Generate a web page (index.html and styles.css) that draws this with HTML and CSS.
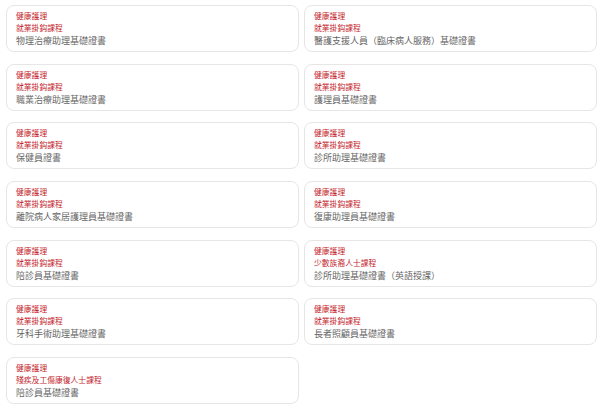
FILE: index.html
```html
<!DOCTYPE html>
<html lang="zh-Hant">
<head>
<meta charset="utf-8">
<link rel="stylesheet" href="styles.css">
</head>
<body>
<div class="grid">
  <div class="card"><div class="cat">健康護理</div><div class="cat">就業掛鈎課程</div><div class="name">物理治療助理基礎證書</div></div>
  <div class="card"><div class="cat">健康護理</div><div class="cat">就業掛鈎課程</div><div class="name">醫護支援人員（臨床病人服務）基礎證書</div></div>
  <div class="card"><div class="cat">健康護理</div><div class="cat">就業掛鈎課程</div><div class="name">職業治療助理基礎證書</div></div>
  <div class="card"><div class="cat">健康護理</div><div class="cat">就業掛鈎課程</div><div class="name">護理員基礎證書</div></div>
  <div class="card"><div class="cat">健康護理</div><div class="cat">就業掛鈎課程</div><div class="name">保健員證書</div></div>
  <div class="card"><div class="cat">健康護理</div><div class="cat">就業掛鈎課程</div><div class="name">診所助理基礎證書</div></div>
  <div class="card"><div class="cat">健康護理</div><div class="cat">就業掛鈎課程</div><div class="name">離院病人家居護理員基礎證書</div></div>
  <div class="card"><div class="cat">健康護理</div><div class="cat">就業掛鈎課程</div><div class="name">復康助理員基礎證書</div></div>
  <div class="card"><div class="cat">健康護理</div><div class="cat">就業掛鈎課程</div><div class="name">陪診員基礎證書</div></div>
  <div class="card"><div class="cat">健康護理</div><div class="cat">少數族裔人士課程</div><div class="name">診所助理基礎證書（英語授課）</div></div>
  <div class="card"><div class="cat">健康護理</div><div class="cat">就業掛鈎課程</div><div class="name">牙科手術助理基礎證書</div></div>
  <div class="card"><div class="cat">健康護理</div><div class="cat">就業掛鈎課程</div><div class="name">長者照顧員基礎證書</div></div>
  <div class="card"><div class="cat">健康護理</div><div class="cat">殘疾及工傷康復人士課程</div><div class="name">陪診員基礎證書</div></div>
</div>
</body>
</html>
```
FILE: styles.css
```css
html, body {
  margin: 0;
  padding: 0;
  background: #ffffff;
}
body {
  font-family: "Noto Sans CJK TC", "Noto Sans", sans-serif;
}
.grid {
  width: 591px;
  padding: 5px 0 0 6px;
  display: grid;
  grid-template-columns: 293px 293px;
  column-gap: 5px;
  row-gap: 11.7px;
}
.card {
  box-sizing: border-box;
  height: 47px;
  border: 1px solid #e6e6e6;
  border-radius: 8px;
  padding: 4px 9px;
  display: flex;
  flex-direction: column;
}
.cat {
  font-size: 7.8px;
  line-height: 12px;
  color: #c4262e;
  white-space: nowrap;
}
.name {
  font-size: 9px;
  line-height: 13px;
  color: #666666;
  white-space: nowrap;
}
```
